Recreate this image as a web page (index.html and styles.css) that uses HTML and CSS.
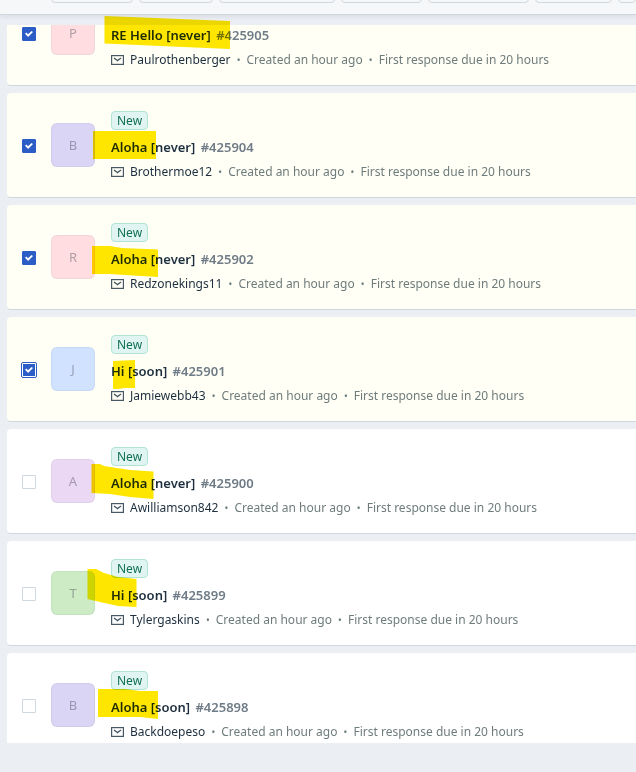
FILE: index.html
```html
<!DOCTYPE html>
<html lang="en">
<head>
  <meta charset="UTF-8" />
  <meta name="viewport" content="width=device-width, initial-scale=1" />
  <title>Tickets</title>
  <link rel="stylesheet" href="styles.css">
</head>
<body>
  <!-- envelope icon shared by all tickets -->
  <svg class="sprite" aria-hidden="true">
    <symbol id="mail" viewBox="0 0 13 10">
      <rect x="0.6" y="0.6" width="11.8" height="8.8" fill="none" stroke="#475867" stroke-width="1.2" />
      <path d="M3 3 L6.500 5.600 L10 3" fill="none" stroke="#475867" stroke-width="1.3" />
    </symbol>
  </svg>

  <header class="toolbar">
    <button type="button" aria-label="Assign"></button>
    <button type="button" aria-label="Close"></button>
    <button type="button" aria-label="Bulk update"></button>
    <button type="button" aria-label="Merge"></button>
    <button type="button" aria-label="Mark as spam"></button>
    <button type="button" aria-label="Delete"></button>
    <button type="button" aria-label="More"></button>
  </header>

  <main class="viewport">
    <ul class="tickets">
      <li class="ticket selected">
        <input type="checkbox" id="t425905" aria-label="Select ticket 425905" checked>
        <span class="avatar pink">P</span>
        <div class="info">
          <label class="subject" for="t425905">RE Hello [never] <span>#425905</span></label>
          <div class="meta"><svg class="mail"><use href="#mail" /></svg><a href="#">Paulrothenberger</a><i>•</i><span>Created an hour ago</span><i>•</i><span>First response due in 20 hours</span></div>
        </div>
      </li>
      <li class="ticket selected">
        <input type="checkbox" id="t425904" aria-label="Select ticket 425904" checked>
        <span class="avatar violet">B</span>
        <div class="info">
          <span class="badge">New</span>
          <label class="subject" for="t425904">Aloha [never] <span>#425904</span></label>
          <div class="meta"><svg class="mail"><use href="#mail" /></svg><a href="#">Brothermoe12</a><i>•</i><span>Created an hour ago</span><i>•</i><span>First response due in 20 hours</span></div>
        </div>
      </li>
      <li class="ticket selected">
        <input type="checkbox" id="t425902" aria-label="Select ticket 425902" checked>
        <span class="avatar pink">R</span>
        <div class="info">
          <span class="badge">New</span>
          <label class="subject" for="t425902">Aloha [never] <span>#425902</span></label>
          <div class="meta"><svg class="mail"><use href="#mail" /></svg><a href="#">Redzonekings11</a><i>•</i><span>Created an hour ago</span><i>•</i><span>First response due in 20 hours</span></div>
        </div>
      </li>
      <li class="ticket selected">
        <input type="checkbox" class="focused" id="t425901" aria-label="Select ticket 425901" checked>
        <span class="avatar blue">J</span>
        <div class="info">
          <span class="badge">New</span>
          <label class="subject" for="t425901">Hi [soon] <span>#425901</span></label>
          <div class="meta"><svg class="mail"><use href="#mail" /></svg><a href="#">Jamiewebb43</a><i>•</i><span>Created an hour ago</span><i>•</i><span>First response due in 20 hours</span></div>
        </div>
      </li>
      <li class="ticket">
        <input type="checkbox" id="t425900" aria-label="Select ticket 425900">
        <span class="avatar purple">A</span>
        <div class="info">
          <span class="badge">New</span>
          <label class="subject" for="t425900">Aloha [never] <span>#425900</span></label>
          <div class="meta"><svg class="mail"><use href="#mail" /></svg><a href="#">Awilliamson842</a><i>•</i><span>Created an hour ago</span><i>•</i><span>First response due in 20 hours</span></div>
        </div>
      </li>
      <li class="ticket">
        <input type="checkbox" id="t425899" aria-label="Select ticket 425899">
        <span class="avatar green">T</span>
        <div class="info">
          <span class="badge">New</span>
          <label class="subject" for="t425899">Hi [soon] <span>#425899</span></label>
          <div class="meta"><svg class="mail"><use href="#mail" /></svg><a href="#">Tylergaskins</a><i>•</i><span>Created an hour ago</span><i>•</i><span>First response due in 20 hours</span></div>
        </div>
      </li>
      <li class="ticket">
        <input type="checkbox" id="t425898" aria-label="Select ticket 425898">
        <span class="avatar violet">B</span>
        <div class="info">
          <span class="badge">New</span>
          <label class="subject" for="t425898">Aloha [soon] <span>#425898</span></label>
          <div class="meta"><svg class="mail"><use href="#mail" /></svg><a href="#">Backdoepeso</a><i>•</i><span>Created an hour ago</span><i>•</i><span>First response due in 20 hours</span></div>
        </div>
      </li>
    </ul>
  </main>

  <!-- yellow marker strokes over the subjects -->
  <svg class="marker" aria-hidden="true">
    <path d="M104.5 16 L230 21 V49 L160 46 L104.5 43.5 Z" />
    <path d="M93 131 H156 V159 H93 Z" />
    <path d="M92 246 H110 L122 248 L158 249.5 V277 L125 275 L110 274 H92 Z" />
    <path d="M113 361 L135 360 V388 L124 388 L119 389 H113 Z" />
    <path d="M91.500 464 H100 L104 466 L130 470 L153.500 471.500 V499 L130 497 L110 494 L91.500 493 Z" />
    <path d="M87.500 569 H96 L104 573 L118 577 L136.500 579 V607 L118 606 L100 602 L87.500 599 Z" />
    <path d="M98 689 H125 L140 691 H158 V719 L140 717 H98 Z" />
  </svg>
</body>
</html>
```

FILE: styles.css
```css
* { box-sizing: border-box; }
body {
  position: relative; display: flex; flex-direction: column; height: 100vh; margin: 0; padding-bottom: 29px;
  overflow: hidden; background: #ebeef3; color: #1d2f3e; font: 13px/20px "Noto Sans", "Open Sans", sans-serif;
}
.sprite { display: none; }

.toolbar {
  display: grid; grid-template-columns: 82px 74px 116px 81px 101px 77px 1fr; gap: 6px; align-content: end;
  height: 15px; padding: 0 0 11px 51px; flex: none; overflow: hidden;
  background: #f5f7f9; border-bottom: 1px solid #cfd7df; box-shadow: 0 2px 4px #18324714;
}
.toolbar button { height: 28px; border: 1px solid #cfd7df; border-radius: 4px; background: #f5f7f9; }

/* list is scrolled part of the way into the first ticket */
.viewport { flex: 1; min-height: 0; margin: 10px 0 0 7px; overflow: hidden; }
.tickets { display: flex; flex-direction: column; gap: 7px; margin: -44px 0 0; padding: 0; list-style: none; }
.ticket {
  display: flex; align-items: center; height: 105px; flex: none; padding-left: 15px;
  background: #fff; border-bottom: 1px solid #cfd7df; border-radius: 4px 0 0 4px;
}
.selected { background: #fffff6; }

input {
  appearance: none; display: grid; place-items: center; flex: none; width: 14px; height: 14px; margin: 2px 15px 0 0;
  border: 1px solid #cfd7df; border-radius: 1px; background: #fff;
}
input:checked { border-color: #2c5cc5; background: #2c5cc5; }
input:checked::after {
  content: ""; width: 8px; height: 6px; background: #fff;
  clip-path: polygon(0 45%, 16% 24%, 38% 55%, 82% 0, 100% 18%, 39% 100%);
}
input.focused:checked { border-color: #fff; outline: 1px solid #2c5cc5; background-clip: padding-box; }

.avatar {
  display: grid; place-items: center; flex: none; width: 44px; height: 44px; margin-right: 16px;
  border: 1px solid #1834470d; border-radius: 6px; color: #3a3a4a66; font-size: 13px;
}
.pink { background: #ffdde0; }
.violet { background: #dbd5f5; }
.blue { background: #d0e2ff; }
.purple { background: #ebd8f5; }
.green { background: #cdebc5; }

.info {
  display: flex; flex-direction: column; align-items: flex-start; align-self: flex-end;
  min-width: 0; padding-bottom: 15px; white-space: nowrap;
}
.badge {
  height: 19px; padding: 0 5px; border: 1px solid #b0e2d5; border-radius: 4px;
  background: #e0f5f1; color: #10704f; font-size: 12px; line-height: 17px;
}
.subject { margin: 7px 0 5px; font-weight: 600; }
.subject span { margin-left: 2px; color: #6f7c87; }
.meta { display: flex; align-items: center; color: #6f7c7c; font-size: 12px; }
.meta a { color: #1d2f3e; text-decoration: none; }
.meta i { width: 16px; font-size: 10px; font-style: normal; text-align: center; }
.mail { width: 13px; height: 10px; margin-right: 6px; }

.marker { position: absolute; inset: 0; width: 100%; height: 100%; fill: #ffe600; mix-blend-mode: multiply; pointer-events: none; }
```
